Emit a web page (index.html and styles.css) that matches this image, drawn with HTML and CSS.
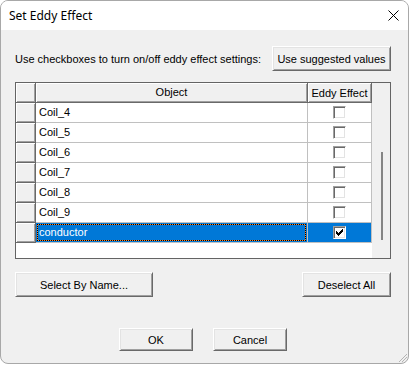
FILE: index.html
```html
<!DOCTYPE html>
<html lang="en">
<head>
    <meta charset="UTF-8">
    <meta name="viewport" content="width=device-width, initial-scale=1.0">
    <title>Set Eddy Effect</title>
    <link rel="stylesheet" href="styles.css">
</head>
<body>
    <div class="window">
        <div class="titlebar">
            <span class="title">Set Eddy Effect</span>
            <svg class="close" width="11" height="11" viewBox="0 0 11 11">
                <path d="M0.5 0.5 L10.5 10.5 M10.5 0.5 L0.5 10.5" stroke="#000" stroke-width="1" fill="none"/>
            </svg>
        </div>

        <div class="content">
            <div class="top-row">
                <span>Use checkboxes to turn on/off eddy effect settings:</span>
                <button class="btn btn-suggest">Use suggested values</button>
            </div>

            <div class="grid">
                <div class="grid-body">
                    <div class="grid-row grid-head">
                        <div class="cell rowhdr"></div>
                        <div class="cell col-obj">Object</div>
                        <div class="cell col-eddy">Eddy Effect</div>
                    </div>
                    <div class="grid-row">
                        <div class="cell rowhdr"></div>
                        <div class="cell col-obj">Coil_4</div>
                        <div class="cell col-eddy"><span class="check"></span></div>
                    </div>
                    <div class="grid-row">
                        <div class="cell rowhdr"></div>
                        <div class="cell col-obj">Coil_5</div>
                        <div class="cell col-eddy"><span class="check"></span></div>
                    </div>
                    <div class="grid-row">
                        <div class="cell rowhdr"></div>
                        <div class="cell col-obj">Coil_6</div>
                        <div class="cell col-eddy"><span class="check"></span></div>
                    </div>
                    <div class="grid-row">
                        <div class="cell rowhdr"></div>
                        <div class="cell col-obj">Coil_7</div>
                        <div class="cell col-eddy"><span class="check"></span></div>
                    </div>
                    <div class="grid-row">
                        <div class="cell rowhdr"></div>
                        <div class="cell col-obj">Coil_8</div>
                        <div class="cell col-eddy"><span class="check"></span></div>
                    </div>
                    <div class="grid-row">
                        <div class="cell rowhdr"></div>
                        <div class="cell col-obj">Coil_9</div>
                        <div class="cell col-eddy"><span class="check"></span></div>
                    </div>
                    <div class="grid-row selected">
                        <div class="cell rowhdr"></div>
                        <div class="cell col-obj"><div class="focus">conductor</div></div>
                        <div class="cell col-eddy">
                            <span class="check">
                                <svg width="7" height="7" viewBox="0 0 7 7">
                                    <path d="M0 2h1v3h-1z M1 3h1v3h-1z M2 4h1v3h-1z M3 3h1v3h-1z M4 2h1v3h-1z M5 1h1v3h-1z M6 0h1v3h-1z" fill="#000"/>
                                </svg>
                            </span>
                        </div>
                    </div>
                </div>
                <div class="scroll"><div class="thumb"></div></div>
            </div>

            <div class="mid-row">
                <button class="btn btn-select">Select By Name...</button>
                <button class="btn btn-deselect">Deselect All</button>
            </div>

            <div class="bottom-row">
                <button class="btn btn-ok">OK</button>
                <button class="btn btn-cancel">Cancel</button>
            </div>
        </div>

        <svg class="grip" width="11" height="11" viewBox="0 0 11 11">
            <path d="M10 2 L2 10 M10 5 L5 10 M10 8 L8 10" stroke="#b4b4b4" stroke-width="1" fill="none"/>
        </svg>
    </div>
</body>
</html>
```

FILE: styles.css
```css
body {
    margin: 0;
    background-color: #fff;
    font-family: "Liberation Sans", Arial, sans-serif;
    font-size: 11px;
    color: #000;
}

.window {
    position: relative;
    width: 409px;
    height: 364px;
    box-sizing: border-box;
    border: 1px solid #a8a8a8;
    border-radius: 8px;
    background-color: #f0f0f0;
    overflow: hidden;
    display: flex;
    flex-direction: column;
}

.titlebar {
    height: 29px;
    flex-shrink: 0;
    background-color: #fff;
    display: flex;
    align-items: center;
    justify-content: space-between;
    padding: 0 9px 0 8px;
}

.title {
    font-family: "Noto Sans", "Open Sans", sans-serif;
    font-size: 12px;
    color: #000;
}

.content {
    padding: 16px 17px 0 14px;
    display: flex;
    flex-direction: column;
}

.top-row {
    display: flex;
    justify-content: space-between;
    align-items: center;
    height: 25px;
}

.btn {
    font-family: "Liberation Sans", Arial, sans-serif;
    font-size: 11px;
    color: #000;
    background-color: #f0f0f0;
    border: 1px solid;
    border-color: #fff #696969 #696969 #fff;
    box-shadow: inset 1px 1px #e3e3e3, inset -1px -1px #a0a0a0;
    padding: 0;
    height: 25px;
}

.btn-suggest {
    width: 119px;
}

.grid {
    margin-top: 11px;
    width: 376px;
    height: 177px;
    box-sizing: border-box;
    border: 1px solid #646464;
    background-color: #fff;
    display: flex;
}

.grid-body {
    width: 356px;
}

.grid-row {
    display: flex;
    height: 20px;
}

.cell {
    box-sizing: border-box;
    height: 20px;
}

.rowhdr {
    width: 20px;
    background-color: #f0f0f0;
    border-right: 1px solid #696969;
    border-bottom: 1px solid #696969;
    box-shadow: inset 1px 1px #fff, inset -1px -1px #a0a0a0;
}

.col-obj {
    width: 272px;
    padding-left: 3px;
    line-height: 19px;
    border-right: 1px solid #c0c0c0;
    border-bottom: 1px solid #c0c0c0;
}

.col-eddy {
    width: 64px;
    border-right: 1px solid #c0c0c0;
    border-bottom: 1px solid #c0c0c0;
    display: flex;
    align-items: center;
    justify-content: center;
}

.grid-head .cell {
    background-color: #f0f0f0;
    border-right: 1px solid #696969;
    border-bottom: 1px solid #696969;
    box-shadow: inset 1px 1px #fff, inset -1px -1px #a0a0a0;
    line-height: 18px;
    text-align: center;
}

.grid-head .col-obj {
    padding-left: 0;
}

.check {
    width: 13px;
    height: 13px;
    box-sizing: border-box;
    background-color: #fff;
    border: 1px solid;
    border-color: #a0a0a0 #fff #fff #a0a0a0;
    box-shadow: inset 1px 1px #696969, inset -1px -1px #e3e3e3;
    display: flex;
    padding: 2px 0 0 2px;
}

.selected .col-obj,
.selected .col-eddy {
    background-color: #0078d7;
    color: #fff;
}

.selected .col-obj {
    padding-left: 0;
}

.focus {
    margin: 1px;
    height: 17px;
    box-sizing: border-box;
    padding-left: 1px;
    line-height: 15px;
    border: 1px dotted #000;
    background: linear-gradient(#0078d7, #0078d7) padding-box, #ff8728;
}

.scroll {
    width: 18px;
    background-color: #f0f0f0;
}

.thumb {
    width: 2px;
    height: 88px;
    margin: 69px 0 0 9px;
    background-color: #858585;
}

.mid-row {
    margin-top: 13px;
    display: flex;
    justify-content: space-between;
}

.btn-select {
    width: 138px;
}

.btn-deselect {
    width: 89px;
}

.bottom-row {
    margin-top: 31px;
    display: flex;
    justify-content: center;
    gap: 20px;
}

.btn-ok,
.btn-cancel {
    height: 23px;
    width: 74px;
}

.grip {
    position: absolute;
    right: 0;
    bottom: 0;
}
```
